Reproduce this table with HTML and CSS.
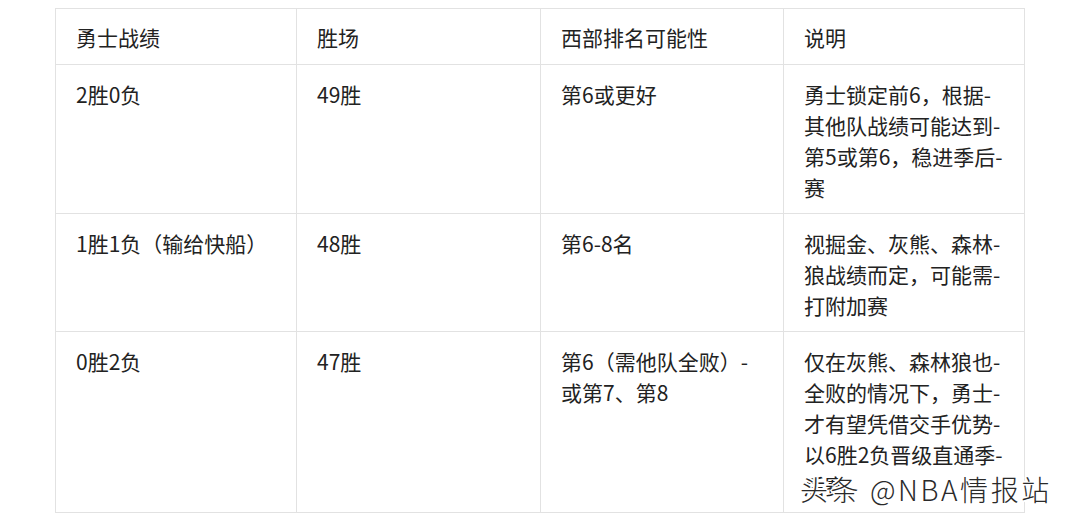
FILE: index.html
```html
<!DOCTYPE html>
<html lang="zh-CN">
<head>
<meta charset="utf-8">
<link rel="stylesheet" href="styles.css">
</head>
<body>
<div class="page">
  <table class="grid">
    <colgroup>
      <col class="c1"><col class="c2"><col class="c3"><col class="c4">
    </colgroup>
    <thead>
      <tr><th>勇士战绩</th><th>胜场</th><th>西部排名可能性</th><th>说明</th></tr>
    </thead>
    <tbody>
      <tr>
        <td>2胜0负</td>
        <td>49胜</td>
        <td>第6或更好</td>
        <td>勇士锁定前6，根据-<br>其他队战绩可能达到-<br>第5或第6，稳进季后-<br>赛</td>
      </tr>
      <tr>
        <td>1胜1负（输给快船）</td>
        <td>48胜</td>
        <td>第6-8名</td>
        <td>视掘金、灰熊、森林-<br>狼战绩而定，可能需-<br>打附加赛</td>
      </tr>
      <tr class="last">
        <td>0胜2负</td>
        <td>47胜</td>
        <td>第6（需他队全败）-<br>或第7、第8</td>
        <td>仅在灰熊、森林狼也-<br>全败的情况下，勇士-<br>才有望凭借交手优势-<br>以6胜2负晋级直通季-<br>后赛</td>
      </tr>
    </tbody>
  </table>
  <div class="watermark">头条 @NBA情报站</div>
</div>
</body>
</html>
```
FILE: styles.css
```css
html, body {
  margin: 0;
  padding: 0;
  background: #ffffff;
}
.page {
  position: relative;
  width: 1068px;
  height: 521px;
  padding: 8px 0 0 55px;
  box-sizing: border-box;
  font-family: "Noto Sans CJK SC", "Noto Sans", sans-serif;
  color: #222222;
}
.grid {
  border-collapse: collapse;
  table-layout: fixed;
  width: 969px;
  font-size: 21px;
  line-height: 31px;
}
.c1 { width: 241px; }
.c2 { width: 244px; }
.c3 { width: 243px; }
.c4 { width: 241px; }
.grid th,
.grid td {
  border: 1px solid #e2e2e2;
  text-align: left;
  vertical-align: top;
  font-weight: normal;
  padding: 14px 20px 10px 20px;
}
.grid th {
  padding: 13px 20px 11px 20px;
}
.grid .last td {
  padding-bottom: 11px;
}
.watermark {
  position: absolute;
  left: 800px;
  top: 472px;
  font-size: 28px;
  line-height: 34px;
  letter-spacing: 2.6px;
  color: #2a2a2a;
  font-family: "Noto Sans CJK SC", "Liberation Sans", sans-serif;
  font-weight: 300;
  text-shadow:
    1px 1px 0 #fff, -1px -1px 0 #fff, 1px -1px 0 #fff, -1px 1px 0 #fff,
    2px 0 0 #fff, -2px 0 0 #fff, 0 2px 0 #fff, 0 -2px 0 #fff;
  white-space: nowrap;
}
```
